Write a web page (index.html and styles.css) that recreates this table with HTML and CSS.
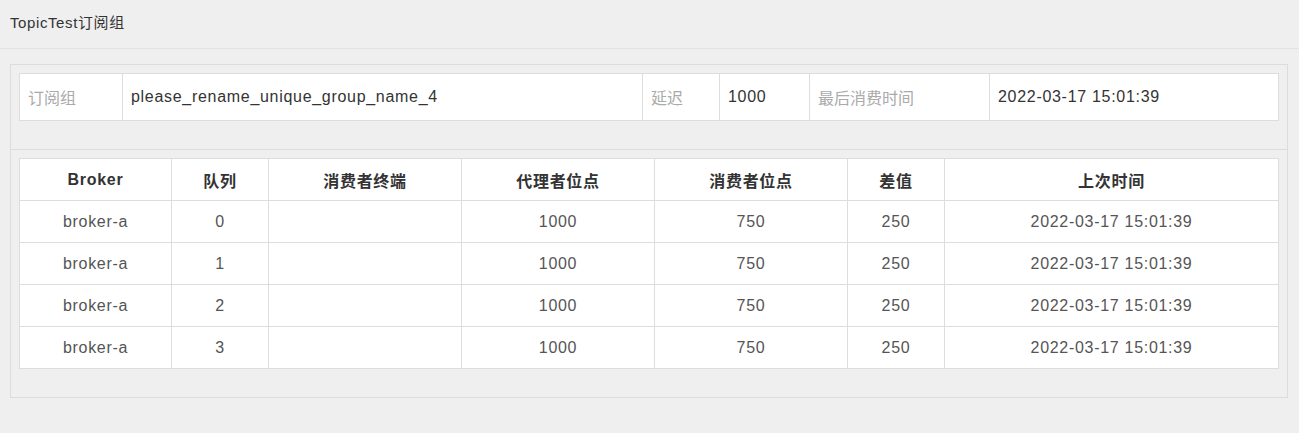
FILE: index.html
```html
<!DOCTYPE html>
<html lang="zh">
<head>
<meta charset="utf-8">
<title>TopicTest订阅组</title>
<link rel="stylesheet" href="styles.css">
</head>
<body>
<div class="page-header">TopicTest订阅组</div>
<div class="panel">
  <div class="panel-section">
    <table class="info-table">
      <colgroup>
        <col class="c-103"><col class="c-520"><col class="c-77"><col class="c-90"><col class="c-180"><col>
      </colgroup>
      <tr>
        <td class="label">订阅组</td>
        <td>please_rename_unique_group_name_4</td>
        <td class="label">延迟</td>
        <td>1000</td>
        <td class="label">最后消费时间</td>
        <td>2022-03-17 15:01:39</td>
      </tr>
    </table>
  </div>
  <div class="panel-section sep">
    <table class="data-table">
      <colgroup>
        <col class="c-152"><col class="c-97"><col class="c-193"><col class="c-193"><col class="c-193"><col class="c-97"><col>
      </colgroup>
      <thead>
        <tr><th>Broker</th><th>队列</th><th>消费者终端</th><th>代理者位点</th><th>消费者位点</th><th>差值</th><th>上次时间</th></tr>
      </thead>
      <tbody>
        <tr><td>broker-a</td><td>0</td><td></td><td>1000</td><td>750</td><td>250</td><td>2022-03-17 15:01:39</td></tr>
        <tr><td>broker-a</td><td>1</td><td></td><td>1000</td><td>750</td><td>250</td><td>2022-03-17 15:01:39</td></tr>
        <tr><td>broker-a</td><td>2</td><td></td><td>1000</td><td>750</td><td>250</td><td>2022-03-17 15:01:39</td></tr>
        <tr><td>broker-a</td><td>3</td><td></td><td>1000</td><td>750</td><td>250</td><td>2022-03-17 15:01:39</td></tr>
      </tbody>
    </table>
  </div>
</div>
</body>
</html>
```
FILE: styles.css
```css
html, body {
  margin: 0;
  padding: 0;
  background: #efefef;
  font-family: "Liberation Sans", Arial, "Noto Sans CJK SC", sans-serif;
  color: #333;
}
.page-header {
  height: 49px;
  line-height: 46px;
  padding-left: 10px;
  font-size: 15px;
  letter-spacing: 0.6px;
  color: #333;
  border-bottom: 1px solid #e2e2e2;
  box-sizing: border-box;
}
.panel {
  margin: 15px 11px 0 10px;
  border: 1px solid #dcdcdc;
  background: #efefef;
}
.panel-section {
  padding: 8px;
}
.panel-section.sep {
  border-top: 1px solid #dcdcdc;
}
table {
  width: 100%;
  border-collapse: collapse;
  background: #fff;
  margin-bottom: 20px;
  table-layout: fixed;
  font-size: 16px;
  letter-spacing: 0.7px;
}
td, th {
  border: 1px solid #dddddd;
  padding: 0 8px;
}
.info-table td {
  height: 46px;
  color: #333;
}
.info-table td.label {
  color: #aaa;
  letter-spacing: 0;
}
.data-table th, .data-table td {
  height: 41px;
  text-align: center;
  color: #555;
}
.data-table th {
  font-weight: bold;
  color: #333;
}
.c-103 { width: 103px; }
.c-520 { width: 520px; }
.c-77 { width: 77px; }
.c-90 { width: 90px; }
.c-180 { width: 180px; }
.c-152 { width: 152px; }
.c-97 { width: 97px; }
.c-193 { width: 193px; }
```
